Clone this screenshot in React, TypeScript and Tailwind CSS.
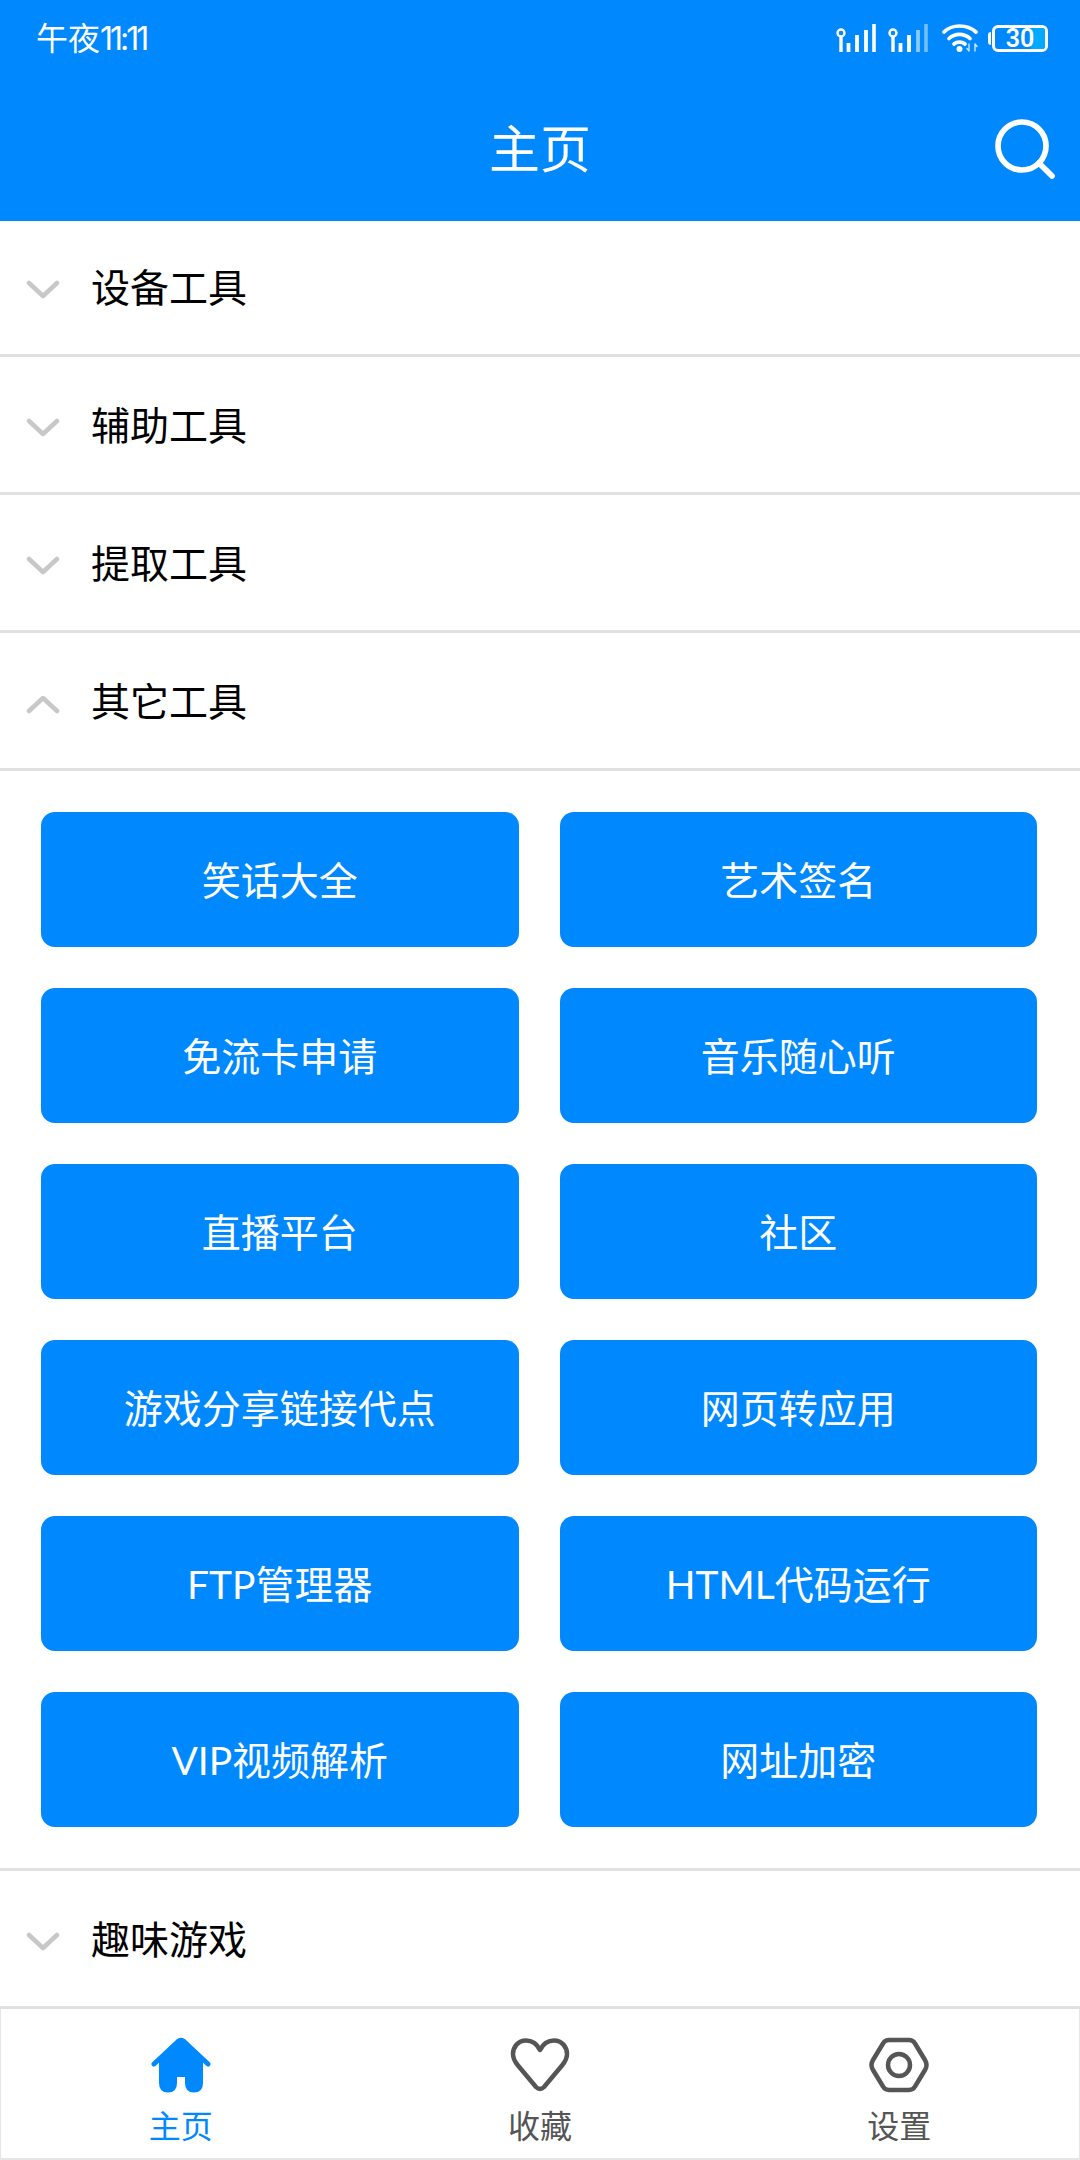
import { Search } from 'lucide-react'

const font = 'font-["Lato","Noto_Sans_CJK_SC",sans-serif]'

const tools = [
  '笑话大全', '艺术签名',
  '免流卡申请', '音乐随心听',
  '直播平台', '社区',
  '游戏分享链接代点', '网页转应用',
  'FTP管理器', 'HTML代码运行',
  'VIP视频解析', '网址加密',
]

function Signal({ weak }: { weak?: boolean }) {
  return (
    <svg width="40" height="28" viewBox="0 0 40 28" fill="none" stroke="white">
      <circle cx="5" cy="9" r="3.500" strokeWidth="2.400" />
      <path d="M5 12v16" strokeWidth="3.400" />
      <path d="M12.500 19v9" strokeWidth="3.800" />
      <path d="M21 11v17" strokeWidth="3.800" />
      <path d="M30 6v22" strokeWidth="3.800" opacity={weak ? 0.55 : 1} />
      <path d="M38 0v28" strokeWidth="3.600" opacity={weak ? 0.45 : 1} />
    </svg>
  )
}

function Wifi() {
  return (
    <svg width="36" height="28" viewBox="0 0 36 28" fill="none" stroke="white" strokeLinecap="round">
      <path d="M2 8C10 0 25 0 34 8" strokeWidth="3.700" />
      <path d="M7 14.500C13 9 22 9 28 14.500" strokeWidth="3.700" />
      <path d="M12 20C15 17.500 20 17.500 23 20" strokeWidth="3.700" />
      <circle cx="17.500" cy="25" r="3" fill="white" stroke="none" />
      <path d="M27 20v7M33 20v7M27 27l-2-2.500M33 20l2 2.500" strokeWidth="1.400" opacity="0.8" />
    </svg>
  )
}

function Battery() {
  return (
    <div className="flex items-center">
      <div className="w-[3px] h-[13px] bg-white rounded-l-sm mr-[1px]" />
      <div className="relative w-[56px] h-[27px] rounded-[6px] border-[3px] border-white overflow-hidden flex items-center justify-center">
        <div className="absolute right-0 top-0 bottom-0 w-[14px] bg-[#00aaff]" />
        <span className="relative text-[25px] leading-none font-semibold text-white font-['Roboto',sans-serif]">30</span>
      </div>
    </div>
  )
}

function Chevron({ open }: { open?: boolean }) {
  return (
    <svg width="34" height="20" viewBox="0 0 34 20" className="mt-[4px]" fill="none" stroke="#c8c8c8" strokeWidth="4.500" strokeLinecap="round" strokeLinejoin="round">
      <path d={open ? 'M3 17L17 4L31 17' : 'M3 3L17 16L31 3'} />
    </svg>
  )
}

function Row({ title, open }: { title: string; open?: boolean }) {
  return (
    <div className="h-[138px] first:h-[136px] pt-[2px] first:pt-0 flex items-center pl-[26px] border-b-[3px] border-[#e0e0e0]">
      <Chevron open={open} />
      <span className="ml-[31px] text-[39px] text-black">{title}</span>
    </div>
  )
}

function HomeIcon() {
  return (
    <svg width="60" height="56" viewBox="0 0 60 56" fill="#0088ff">
      <path d="M8 24L26 5.500Q30 1.500 34 5.500L52 24V46Q52 55.500 43 55.500Q34 55.500 34 46V40H26V46Q26 55.500 17 55.500Q8 55.500 8 46Z" />
      <path d="M3 27L27 4.500Q30 2 33 4.500L57 27" fill="none" stroke="#0088ff" strokeWidth="5" strokeLinecap="round" />
    </svg>
  )
}

function HeartIcon() {
  return (
    <svg width="60" height="56" viewBox="0 0 60 56" fill="none" stroke="#555555" strokeWidth="4.500" strokeLinejoin="round">
      <path d="M30 13C27 7 22 3.500 16 3.500C8 3.500 3 10 3 17C3 22 5 25 8 28.500L26 50Q30 54 34 50L52 28.500C55 25 57 22 57 17C57 10 52 3.500 44 3.500C38 3.500 33 7 30 13Z" />
    </svg>
  )
}

function SettingsIcon() {
  return (
    <svg width="60" height="56" viewBox="0 0 60 56" fill="none" stroke="#555555" strokeWidth="4.500">
      <path d="M20 3H40Q44 3 46 6.500L56 23Q59 28 56 33L46 49.500Q44 53 40 53H20Q16 53 14 49.500L4 33Q1 28 4 23L14 6.500Q16 3 20 3Z" />
      <circle cx="30" cy="28" r="11" />
    </svg>
  )
}

function Tab({ icon, label, active }: { icon: React.ReactNode; label: string; active?: boolean }) {
  return (
    <div className="flex-1 flex flex-col items-center pt-[28px]">
      {icon}
      <span className={`mt-[13px] text-[32px] leading-[40px] ${active ? 'text-[#0088ff]' : 'text-[#555555]'}`}>{label}</span>
    </div>
  )
}

export default function App() {
  return (
    <div className={`w-[1080px] h-[2160px] bg-white flex flex-col overflow-hidden ${font}`}>
      {/* 顶部 */}
      <div className="h-[221px] shrink-0 bg-[#0088ff] text-white">
        <div className="h-[76px] flex items-center justify-between pl-[36px] pr-[32px]">
          <span className="text-[32px]">
            午夜<span className="font-['Inter',sans-serif] tracking-[-3px]">11:11</span>
          </span>
          <div className="flex items-center">
            <Signal />
            <div className="ml-[12px]"><Signal weak /></div>
            <div className="ml-[14px]"><Wifi /></div>
            <div className="ml-[10px]"><Battery /></div>
          </div>
        </div>
        <div className="h-[145px] grid grid-cols-[1fr_auto_1fr] items-center px-[19px]">
          <div />
          <span className="text-[51px] leading-none">主页</span>
          <Search size={72} strokeWidth={1.9} color="white" className="justify-self-end" />
        </div>
      </div>

      <div className="flex flex-col">
        <Row title="设备工具" />
        <Row title="辅助工具" />
        <Row title="提取工具" />
        <Row title="其它工具" open />
      </div>

      <div className="grid grid-cols-2 gap-[41px] pl-[41px] pr-[43px] py-[41px] border-b-[3px] border-[#e0e0e0]">
        {tools.map(name => (
          <div key={name} className="h-[135px] pt-[2px] rounded-[14px] bg-[#0088ff] text-white text-[39px] flex items-center justify-center">
            {name}
          </div>
        ))}
      </div>

      <div className="h-[138px] shrink-0 pt-[2px] flex items-center pl-[26px] border-b-[3px] border-[#e0e0e0]">
        <Chevron />
        <span className="ml-[31px] text-[39px] text-black">趣味游戏</span>
      </div>

      {/* 底部导航 */}
      <div className="h-[151px] shrink-0 flex border-x border-b-2 border-[#e6e6e6]">
        <Tab icon={<HomeIcon />} label="主页" active />
        <Tab icon={<HeartIcon />} label="收藏" />
        <Tab icon={<SettingsIcon />} label="设置" />
      </div>
    </div>
  )
}
